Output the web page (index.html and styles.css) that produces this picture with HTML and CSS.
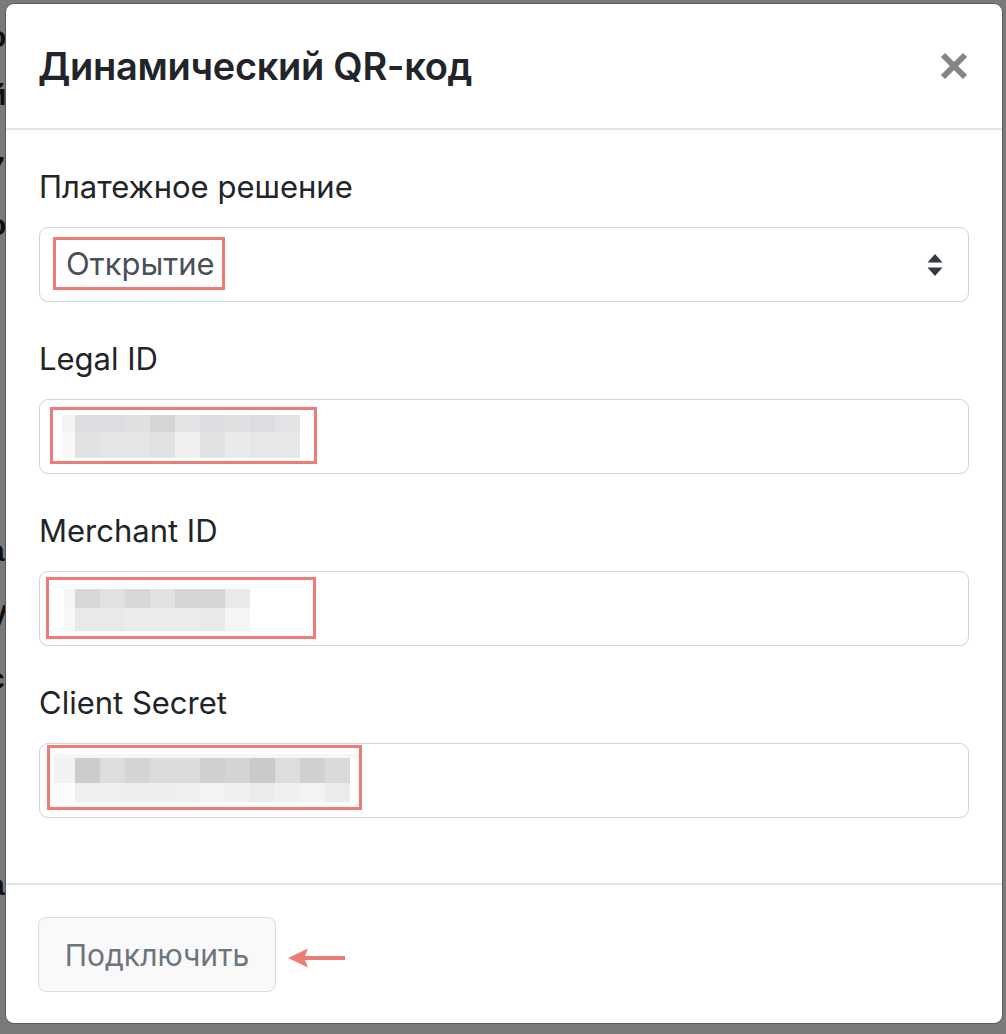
FILE: index.html
```html
<!DOCTYPE html>
<html lang="ru">
<head>
<meta charset="utf-8">
<title>Динамический QR-код</title>
<link rel="stylesheet" href="styles.css">
</head>
<body>
<div class="backdrop">
  <span class="bg-line l1">о</span>
  <span class="bg-line l2">й</span>
  <span class="bg-line l3">7</span>
  <span class="bg-line l4">о</span>
  <span class="bg-line l5">I</span>
  <span class="bg-line l6">а</span>
  <span class="bg-line l7">V</span>
  <span class="bg-line l8">с</span>
  <span class="bg-line l9">-</span>
  <span class="bg-line l10">а</span>
</div>

<div class="modal">
  <div class="modal-header">
    <h5 class="modal-title">Динамический QR-код</h5>
    <button class="close" type="button" aria-label="Закрыть">
      <svg width="28" height="28" viewBox="0 0 28 28"><path d="M3 3 L25 25 M25 3 L3 25" stroke="#858585" stroke-width="6" fill="none"/></svg>
    </button>
  </div>

  <div class="modal-body">
    <div class="form-group">
      <label class="label">Платежное решение</label>
      <div class="form-control select">
        <span class="mark mark-select">Открытие</span>
        <svg class="arrows" width="16" height="22" viewBox="0 0 16 22"><path d="M8 0 L15.5 8.5 L0.5 8.5 Z M8 22 L15.5 13.5 L0.5 13.5 Z" fill="#343a40"/></svg>
      </div>
    </div>

    <div class="form-group">
      <label class="label">Legal ID</label>
      <div class="form-control">
        <div class="mark mark-legal">
          <div class="blur blur-legal">
            <i class="p f3"></i><i class="p d4"></i><i class="p d4"></i><i class="p d3"></i><i class="p d6"></i><i class="p d1"></i><i class="p d4"></i><i class="p d3"></i><i class="p d4"></i><i class="p d1"></i>
            <i class="p f8"></i><i class="p e1"></i><i class="p e4"></i><i class="p e4"></i><i class="p e1"></i><i class="p f0"></i><i class="p e1"></i><i class="p e9"></i><i class="p e6"></i><i class="p e6"></i>
          </div>
        </div>
      </div>
    </div>

    <div class="form-group">
      <label class="label">Merchant ID</label>
      <div class="form-control">
        <div class="mark mark-merchant">
          <div class="blur blur-merchant">
            <i class="p f4"></i><i class="p d5"></i><i class="p e0"></i><i class="p d5"></i><i class="p e0"></i><i class="p d6"></i><i class="p d6"></i><i class="p e8"></i>
            <i class="p f8"></i><i class="p e8"></i><i class="p e8"></i><i class="p eb"></i><i class="p eb"></i><i class="p ea"></i><i class="p e8"></i><i class="p f4"></i>
          </div>
        </div>
      </div>
    </div>

    <div class="form-group">
      <label class="label">Client Secret</label>
      <div class="form-control">
        <div class="mark mark-client">
          <div class="blur blur-client">
            <i class="p f2"></i><i class="p cb"></i><i class="p dc"></i><i class="p d7"></i><i class="p db"></i><i class="p db"></i><i class="p cf"></i><i class="p d7"></i><i class="p c9"></i><i class="p dc"></i><i class="p cf"></i><i class="p d9"></i>
            <i class="p fb"></i><i class="p ee"></i><i class="p ee"></i><i class="p ed"></i><i class="p ed"></i><i class="p ee"></i><i class="p f3"></i><i class="p f0"></i><i class="p ea"></i><i class="p ee"></i><i class="p f3"></i><i class="p ea"></i>
          </div>
        </div>
      </div>
    </div>
  </div>

  <div class="modal-footer">
    <button class="btn" type="button">Подключить</button>
    <svg class="pointer" width="58" height="20" viewBox="0 0 58 20"><path d="M0 10 L20 0.5 L17 8 L57 8 L57 12 L17 12 L20 19.5 Z" fill="#ee7b76"/></svg>
  </div>
</div>
</body>
</html>
```

FILE: styles.css
```css
* { box-sizing: border-box; }

html, body {
  margin: 0;
  padding: 0;
  width: 1006px;
  height: 1034px;
  overflow: hidden;
}

body {
  background: #7a7a7a;
  font-family: Inter, "Noto Sans", "Liberation Sans", sans-serif;
  color: #212529;
  position: relative;
}

/* page behind the overlay */
.backdrop {
  display: flex;
  flex-direction: column;
  align-items: flex-start;
  font-family: "Liberation Sans", Arial, sans-serif;
  font-weight: 700;
  font-size: 30px;
  line-height: 30px;
  color: #111;
}
.bg-line { display: block; margin-left: -12px; }
.l1 { margin-top: 22px; }
.l2 { margin-top: 28px; }
.l3 { margin-top: 42px; }
.l4 { margin-top: 28px; }
.l5 { margin-top: 36px; }
.l6 { margin-top: 230px; }
.l7 { margin-top: 34px; }
.l8 { margin-top: 34px; }
.l9 { margin-top: 74px; }
.l10 { margin-top: 72px; }

/* modal window (overlay) */
.modal {
  position: absolute;
  left: 5px;
  top: 3px;
  width: 998px;
  height: 1021px;
  background: #fff;
  border: 1px solid #5c5c5c;
  border-radius: 9px;
  display: flex;
  flex-direction: column;
  overflow: hidden;
}

.modal-header {
  display: flex;
  align-items: center;
  justify-content: space-between;
  padding: 32px 34px 32px 32px;
  border-bottom: 2px solid #e3e6e9;
  height: 127px;
}

.modal-title {
  margin: 0;
  font-size: 38px;
  font-weight: 600;
  line-height: 60px;
  color: #212529;
  letter-spacing: -0.3px;
}

.close {
  border: 0;
  background: none;
  padding: 0;
  width: 28px;
  height: 28px;
  display: flex;
}

.modal-body {
  padding: 34px 33px 31px 33px;
}

.form-group { margin-bottom: 34px; }

.label {
  display: block;
  font-size: 31px;
  line-height: 45px;
  margin-bottom: 18px;
  color: #212529;
}

.form-control {
  height: 75px;
  border: 1px solid #ced4da;
  border-radius: 9px;
  display: flex;
  align-items: flex-start;
  background: #fff;
}

.select {
  justify-content: space-between;
  padding-right: 25px;
}
.arrows { align-self: center; }

.mark {
  border: 3px solid #ee7b76;
}

.mark-select {
  margin: 9px 0 0 13px;
  width: 172px;
  height: 53px;
  padding-left: 10px;
  font-size: 31px;
  line-height: 48px;
  color: #495057;
}

.mark-legal { margin: 7px 0 0 10px; width: 267px; height: 57px; padding: 5px 0 0 9px; }
.mark-merchant { margin: 5px 0 0 6px; width: 270px; height: 62px; padding: 9px 0 0 15px; }
.mark-client { margin: 1px 0 0 7px; width: 315px; height: 65px; padding: 10px 0 0 4px; }

.blur { display: grid; }
.blur-legal { grid-template-columns: 13px repeat(9, 25px); grid-template-rows: 17px 26px; }
.blur-merchant { grid-template-columns: 11px repeat(7, 25px); grid-template-rows: 19px 23px; }
.blur-client { grid-template-columns: 21px repeat(11, 25px); grid-template-rows: 25px 19px; box-shadow: 0 -4px 0 #f6f6f6; }

.p { display: block; }
.c9 { background: #c9cacc; }
.cb { background: #cbcccd; }
.cf { background: #cfd0d2; }
.d1 { background: #e2e3e5; }
.d3 { background: #dfe0e2; }
.d4 { background: #dcdde0; }
.d5 { background: #d6d7d9; }
.d6 { background: #d4d5d7; }
.d7 { background: #d3d4d6; }
.d9 { background: #d9dadc; }
.db { background: #dbdcde; }
.dc { background: #dcdddf; }
.e0 { background: #e0e1e3; }
.e1 { background: #e1e2e4; }
.e4 { background: #e4e5e7; }
.e6 { background: #e6e7e8; }
.e8 { background: #e8e9ea; }
.e9 { background: #e9eaeb; }
.ea { background: #eaebec; }
.eb { background: #ebecee; }
.ed { background: #edeeee; }
.ee { background: #eeefef; }
.f0 { background: #f0f0f1; }
.f2 { background: #f2f2f3; }
.f3 { background: #f3f3f4; }
.f4 { background: #f4f5f5; }
.f8 { background: #f8f8f8; }
.fb { background: #fbfbfb; }

.modal-footer {
  border-top: 2px solid #e3e6e9;
  padding: 32px 32px;
  display: flex;
  align-items: center;
  gap: 12px;
}

.btn {
  width: 238px;
  height: 75px;
  background: #f9f9f9;
  border: 1px solid #dcdcdc;
  border-radius: 8px;
  font-family: Inter, "Noto Sans", "Liberation Sans", sans-serif;
  font-size: 30px;
  color: #6c757d;
  padding: 0;
}

.pointer { margin-top: 6px; }
```
